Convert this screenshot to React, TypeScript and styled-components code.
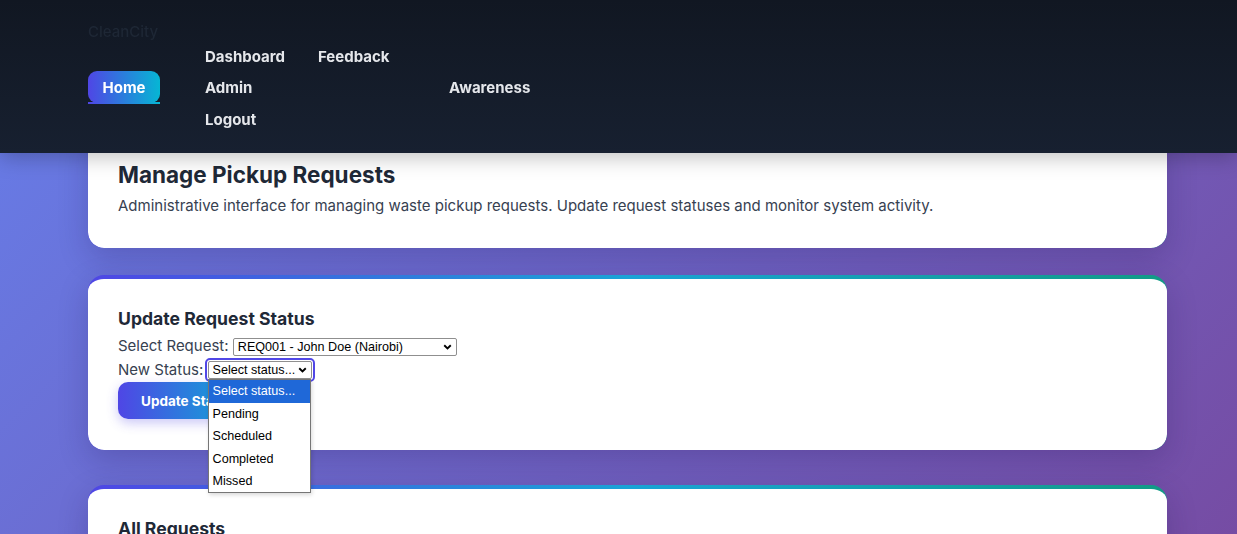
import React, { useState } from "react";
import styled, { createGlobalStyle } from "styled-components";

const GlobalStyle = createGlobalStyle`
  * {
    box-sizing: border-box;
  }
  html, body {
    margin: 0;
    padding: 0;
  }
  body {
    font-family: Inter, "Noto Sans", "Liberation Sans", sans-serif;
    background: linear-gradient(135deg, #667eea 0%, #764ba2 100%);
    min-height: 100vh;
    overflow: hidden;
  }
`;

const navLinks = [
  { label: "Dashboard", col: 2, row: 1 },
  { label: "Feedback", col: 3, row: 1 },
  { label: "Admin", col: 2, row: 2 },
  { label: "Awareness", col: 4, row: 2 },
  { label: "Logout", col: 2, row: 3 },
];

const statusOptions = ["Select status...", "Pending", "Scheduled", "Completed", "Missed"];

const Chevron: React.FC = () => (
  <ChevronIcon viewBox="0 0 10 7" aria-hidden="true">
    <path d="M1.2 1.5 L5 5.2 L8.8 1.5" fill="none" stroke="#000" strokeWidth="2.2" />
  </ChevronIcon>
);

const App: React.FC = () => {
  const [request, setRequest] = useState<string>("REQ001");
  const [status, setStatus] = useState<string>(""); // dropdown is shown open

  return (
    <>
      <GlobalStyle />
      <Header>
        <Logo>CleanCity</Logo>
        <Nav>
          <HomeButton>Home</HomeButton>
          {navLinks.map((link) => (
            <NavLink key={link.label} $col={link.col} $row={link.row}>
              {link.label}
            </NavLink>
          ))}
        </Nav>
      </Header>

      <Main>
        <Card $gap={27}>
          <PageTitle>Manage Pickup Requests</PageTitle>
          <PageText>
            Administrative interface for managing waste pickup requests. Update request statuses and
            monitor system activity.
          </PageText>
        </Card>

        <Card $gap={35}>
          <SectionTitle>Update Request Status</SectionTitle>
          <FieldRow>
            Select Request:{" "}
            <SelectWrap>
              <NativeSelect
                $width={224}
                value={request}
                onChange={(e) => setRequest(e.target.value)}
              >
                <option value="REQ001">REQ001 - John Doe (Nairobi)</option>
                <option value="REQ002">REQ002 - Jane Smith (Mombasa)</option>
              </NativeSelect>
              <Chevron />
            </SelectWrap>
          </FieldRow>
          <FieldRow>
            New Status:{" "}
            <SelectWrap>
              <NativeSelect
                $width={104}
                $focused
                value={status}
                onChange={(e) => setStatus(e.target.value)}
              >
                {statusOptions.map((opt, i) => (
                  <option key={opt} value={i === 0 ? "" : opt}>
                    {opt}
                  </option>
                ))}
              </NativeSelect>
              <Chevron />
              <OptionList>
                {statusOptions.map((opt, i) => (
                  <OptionItem key={opt} $active={i === 0}>
                    {opt}
                  </OptionItem>
                ))}
              </OptionList>
            </SelectWrap>
          </FieldRow>
          <PrimaryButton>Update Status</PrimaryButton>
        </Card>

        <Card $gap={0}>
          <SectionTitle>All Requests</SectionTitle>
        </Card>
      </Main>
    </>
  );
};

export default App;

// Styled Components
const Header = styled.header`
  position: fixed;
  top: 0;
  left: 0;
  right: 0;
  z-index: 10;
  height: 153px;
  padding: 22.5px 0 0 88px;
  background: linear-gradient(180deg, #111722 0%, #172030 100%);
  box-shadow: 0 4px 20px rgba(0, 0, 0, 0.25);
`;

const Logo = styled.div`
  font-size: 15px;
  line-height: 18px;
  font-weight: 500;
  color: #1e2735;
`;

const Nav = styled.nav`
  display: grid;
  grid-template-columns: 117px 113px 131px auto;
  grid-template-rows: repeat(3, 31.5px);
  align-items: center;
`;

const HomeButton = styled.a`
  position: relative;
  grid-column: 1;
  grid-row: 1 / span 3;
  align-self: center;
  justify-self: start;
  margin-top: -1px;
  width: 72px;
  height: 32px;
  display: flex;
  align-items: center;
  justify-content: center;
  border-radius: 9px;
  background: linear-gradient(90deg, #4f46e5 0%, #06b6d4 100%);
  color: #ffffff;
  font-size: 15px;
  font-weight: 700;

  &::after {
    content: "";
    position: absolute;
    left: 0;
    right: 0;
    bottom: -1px;
    height: 2px;
    background: linear-gradient(90deg, #4f46e5, #06b6d4);
  }
`;

const NavLink = styled.a<{ $col: number; $row: number }>`
  grid-column: ${({ $col }) => $col};
  grid-row: ${({ $row }) => $row};
  color: #e5e7eb;
  font-size: 15px;
  font-weight: 700;
  white-space: nowrap;
`;

const Main = styled.main`
  display: flex;
  flex-direction: column;
  padding: 127px 0 0 88px;
  width: 1167px;
`;

const Card = styled.section<{ $gap: number }>`
  margin-bottom: ${({ $gap }) => $gap}px;
  padding: 29px 30px 31px;
  border-top: 4px solid transparent;
  border-radius: 16px;
  background:
    linear-gradient(#ffffff, #ffffff) padding-box,
    linear-gradient(90deg, #4f46e5 0%, #1aa3d6 50%, #129b86 100%) border-box;
  box-shadow: 0 10px 30px rgba(30, 20, 80, 0.22);
`;

const PageTitle = styled.h1`
  margin: 1px 0 5px;
  font-size: 22.5px;
  line-height: 28px;
  font-weight: 700;
  color: #1f2937;
`;

const PageText = styled.p`
  margin: 0;
  font-size: 15px;
  line-height: 23px;
  color: #374151;
`;

const SectionTitle = styled.h3`
  margin: 0 0 4px;
  font-size: 17.6px;
  line-height: 22px;
  font-weight: 700;
  color: #1f2937;
`;

const FieldRow = styled.div`
  font-size: 15px;
  line-height: 23.5px;
  color: #374151;
`;

const SelectWrap = styled.span`
  position: relative;
  display: inline-block;
  vertical-align: middle;
  line-height: 0;
`;

const NativeSelect = styled.select<{ $width: number; $focused?: boolean }>`
  appearance: none;
  width: ${({ $width }) => $width}px;
  height: 18px;
  padding: 0 16px 0 4px;
  font-family: "Liberation Sans", Arial, sans-serif;
  font-size: 12.6px;
  line-height: 16px;
  color: #000000;
  background: #ffffff;
  border: 1px solid #8f8f8f;
  border-radius: 2px;
  outline: ${({ $focused }) => ($focused ? "2px solid #5147e6" : "none")};
  outline-offset: 1px;
`;

const ChevronIcon = styled.svg`
  position: absolute;
  right: 5px;
  top: 6px;
  width: 9px;
  height: 6px;
  pointer-events: none;
`;

const OptionList = styled.ul`
  position: absolute;
  top: 100%;
  left: 0;
  z-index: 5;
  width: 103px;
  margin: 0;
  padding: 0;
  list-style: none;
  background: #ffffff;
  border: 1px solid #767676;
  box-shadow: 1px 2px 4px rgba(0, 0, 0, 0.15);
`;

const OptionItem = styled.li<{ $active?: boolean }>`
  height: 22.4px;
  padding: 0 4px;
  font-family: "Liberation Sans", Arial, sans-serif;
  font-size: 12.6px;
  line-height: 22.4px;
  white-space: nowrap;
  color: ${({ $active }) => ($active ? "#ffffff" : "#000000")};
  background: ${({ $active }) => ($active ? "#1f68d8" : "transparent")};
`;

const PrimaryButton = styled.button`
  align-self: flex-start;
  margin-top: 1px;
  height: 37px;
  padding: 0 23px;
  border: none;
  border-radius: 10px;
  background: linear-gradient(90deg, #4f46e5 0%, #06b6d4 100%);
  color: #ffffff;
  font-family: Inter, "Liberation Sans", sans-serif;
  font-size: 13.5px;
  font-weight: 700;
  box-shadow: 0 4px 12px rgba(79, 70, 229, 0.3);
  cursor: pointer;
`;
